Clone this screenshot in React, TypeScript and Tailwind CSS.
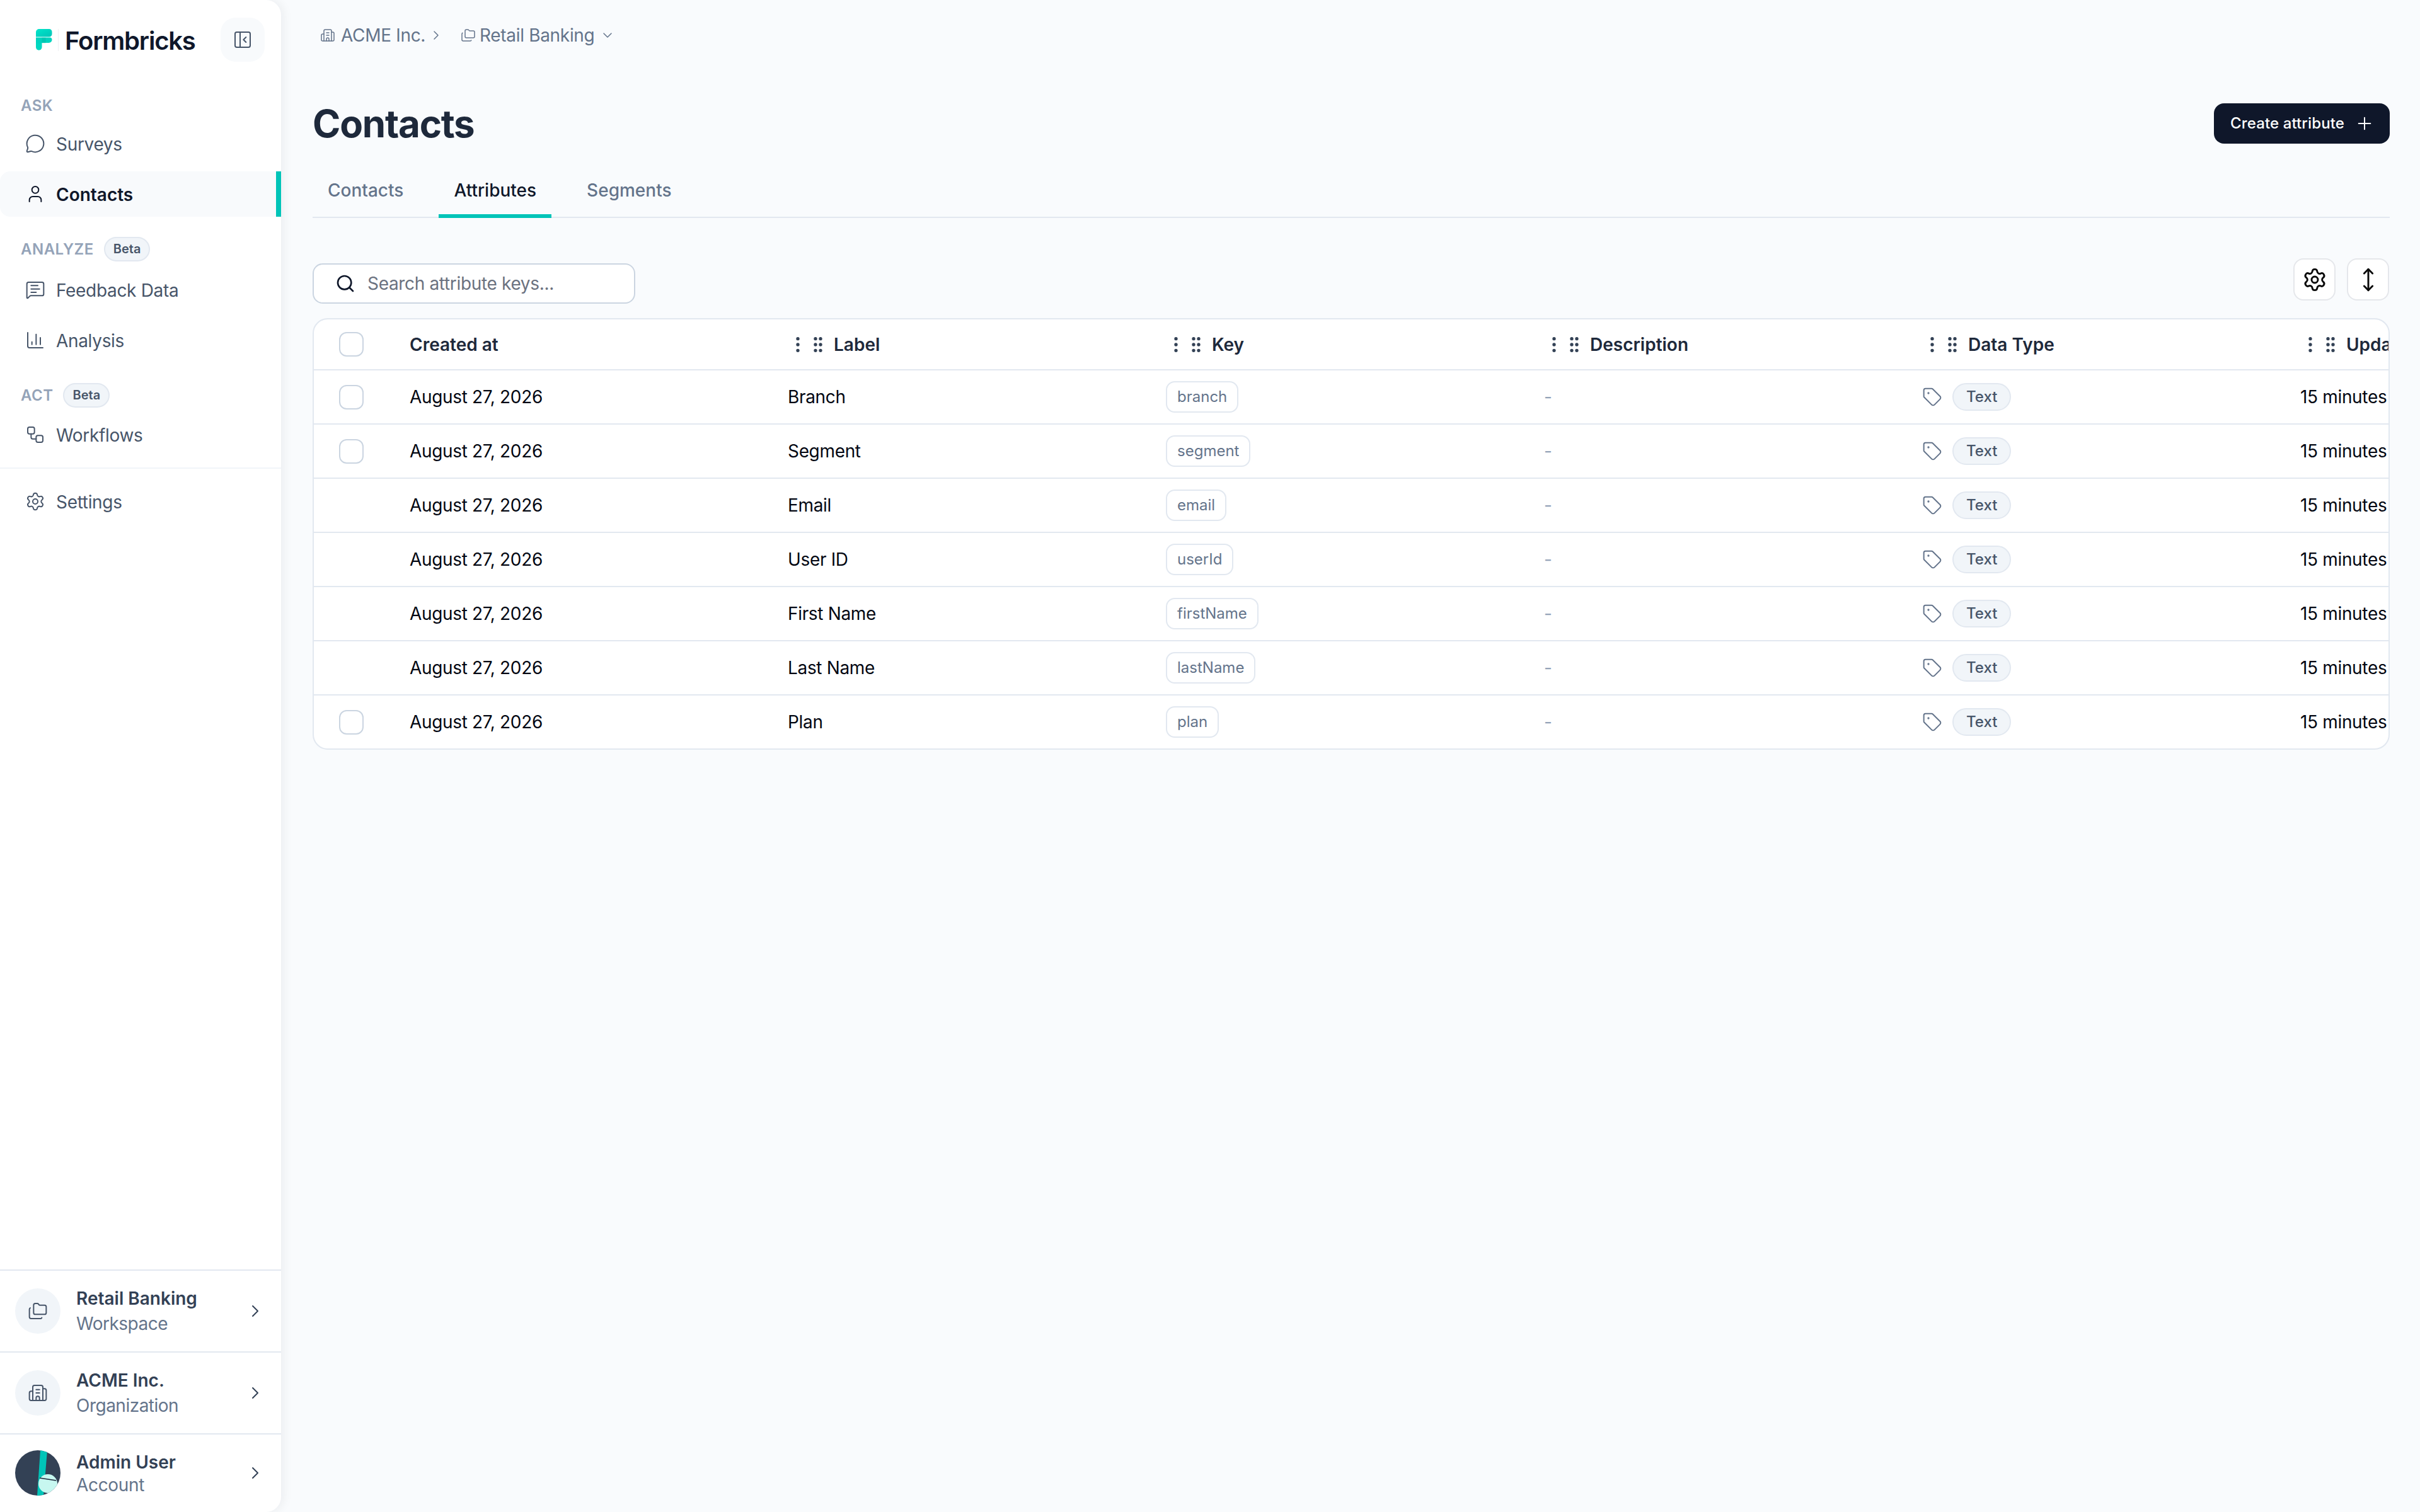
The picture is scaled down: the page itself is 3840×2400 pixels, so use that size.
import React from "react";
import {
  PanelLeftClose, MessageCircle, User, MessageSquareText, ChartColumn, Workflow, Settings,
  Folders, Building2, ChevronRight, ChevronDown, Plus, Search, MoveVertical, EllipsisVertical, GripVertical, Tag,
} from "lucide-react";

function NavItem({ icon: Icon, label, active }: { icon: any; label: string; active?: boolean }) {
  return (
    <div className={active
      ? "flex items-center h-[72px] pl-[40px] gap-[17px] bg-[#f8fafc] border-r-[8px] border-[#00c4b8] rounded-l-[16px] text-[#0f172a] font-semibold"
      : "flex items-center h-[72px] pl-[40px] gap-[17px] text-[#475569] font-normal tracking-[-0.02em]"}>
      <Icon size={32} strokeWidth={1.5} />
      <span className="text-[28px] leading-[40px] pt-px">{label}</span>
    </div>
  );
}

function GroupLabel({ label, beta }: { label: string; beta?: boolean }) {
  return (
    <div className="flex items-center gap-[16px] pl-[33px] h-[40px]">
      <span className="text-[24px] leading-[32px] font-semibold tracking-[0.02em] text-[#94a3b8] pt-px">{label}</span>
      {beta && (
        <span className="flex items-center h-[39px] px-[13px] rounded-full border-2 border-[#e2e8f0] bg-[#f1f5f9] text-[20px] font-semibold text-[#475569]">Beta</span>
      )}
    </div>
  );
}

function BottomRow({ icon, title, sub, tall }: { icon: React.ReactNode; title: string; sub: string; tall?: boolean }) {
  return (
    <div className={tall ? "flex items-center h-[130px] pl-[24px] pr-[25px] border-t-2 border-[#e2e8f0]" : "flex items-center h-[125px] pl-[24px] pr-[25px] border-t-2 border-[#e2e8f0] pb-[2px]"}>
      {icon}
      <div className="ml-[25px] flex-1 min-w-0">
        <div className="text-[28px] leading-[40px] font-semibold text-[#334155]">{title}</div>
        <div className={tall ? "text-[28px] leading-[40px] tracking-[-0.018em] text-[#64748b]" : "text-[28px] leading-[36px] tracking-[-0.012em] -mt-[2px] text-[#64748b]"}>{sub}</div>
      </div>
      <ChevronRight size={32} strokeWidth={1.5} className="text-[#334155]" />
    </div>
  );
}

function IconCircle({ icon: Icon }: { icon: any }) {
  return (
    <div className="flex items-center justify-center w-[72px] h-[72px] rounded-full bg-[#f1f5f9] text-[#475569] shrink-0">
      <Icon size={32} strokeWidth={1.5} />
    </div>
  );
}

function Avatar() {
  return (
    <svg width="72" height="72" viewBox="0 0 72 72" className="shrink-0">
      <defs><clipPath id="av"><circle cx="36" cy="36" r="36" /></clipPath></defs>
      <g clipPath="url(#av)">
        <rect width="72" height="72" fill="#334155" />
        <polygon points="40,0 51,0 45,72 35,72" fill="#00c4b8" />
        <circle cx="52" cy="53" r="15" fill="#c7f7f0" />
        <line x1="39" y1="44" x2="65" y2="48" stroke="#1e293b" strokeWidth="1.5" />
      </g>
    </svg>
  );
}

function Logo() {
  return (
    <svg width="26" height="34" viewBox="0 0 26 34" className="shrink-0">
      <defs>
        <linearGradient id="lg" x1="0" y1="0" x2="1" y2="1">
          <stop offset="0" stopColor="#00e6ca" />
          <stop offset="1" stopColor="#00c4b8" />
        </linearGradient>
      </defs>
      <path d="M5 0H21a4.5 4.5 0 0 1 4.5 4.5V8a4.5 4.5 0 0 1-4.5 4.5H0V5a5 5 0 0 1 5-5z" fill="url(#lg)" />
      <path d="M0 13.5H22a3.5 3.5 0 0 1 3.5 3.5a5 5 0 0 1-5 5H9.5V23H0z" fill="#00d4be" />
      <path d="M0 23H9.5V29a4.7 4.7 0 0 1-9.5 0z" fill="#00d8c0" />
      <rect x="9.5" y="13.5" width="6" height="9" fill="#00a89a" opacity="0.3" />
    </svg>
  );
}

const rows: [string, string, boolean][] = [
  ["Branch", "branch", true],
  ["Segment", "segment", true],
  ["Email", "email", false],
  ["User ID", "userId", false],
  ["First Name", "firstName", false],
  ["Last Name", "lastName", false],
  ["Plan", "plan", true],
];

function Checkbox() {
  return <div className="w-[39px] h-[39px] rounded-[12px] border-2 border-[#cbd5e1] bg-white" />;
}

function HeadCell({ label }: { label: string }) {
  return (
    <div className="w-[600px] shrink-0 flex items-center pl-[24px]">
      <EllipsisVertical size={32} strokeWidth={2} className="text-[#334155] shrink-0" />
      <GripVertical size={32} strokeWidth={2} className="text-[#334155] shrink-0" />
      <span className="ml-[9px] text-[28px] font-semibold text-[#1e293b]">{label}</span>
    </div>
  );
}

export default function App() {
  return (
    <div className="flex w-[3840px] h-[2400px] overflow-hidden bg-[#f9fbfd] font-['Inter',sans-serif]">
      <aside className="flex flex-col w-[446px] h-full shrink-0 bg-white rounded-r-[24px] shadow-[4px_0_16px_rgba(15,23,42,0.06)]">
        <div className="flex items-center h-[126px] pl-[57px] pr-[26px] shrink-0">
          <Logo />
          <div className="ml-[9px] w-px h-[35px] bg-[#eef0f3]" />
          <span className="ml-[10px] mt-[4px] text-[40px] leading-[48px] font-semibold tracking-[-0.03em] text-[#0f172a]">Formbricks</span>
          <div className="ml-auto flex items-center justify-center w-[70px] h-[70px] rounded-[24px] bg-[#f8fafc] text-[#475569]">
            <PanelLeftClose size={32} strokeWidth={1.5} />
          </div>
        </div>

        <div className="mt-[21px]"><GroupLabel label="ASK" /></div>
        <div className="mt-[5px] flex flex-col gap-[8px]">
          <NavItem icon={MessageCircle} label="Surveys" />
          <NavItem icon={User} label="Contacts" active />
        </div>

        <div className="mt-[31px]"><GroupLabel label="ANALYZE" beta /></div>
        <div className="mt-[9px] flex flex-col gap-[8px]">
          <NavItem icon={MessageSquareText} label="Feedback Data" />
          <NavItem icon={ChartColumn} label="Analysis" />
        </div>

        <div className="mt-[31px]"><GroupLabel label="ACT" beta /></div>
        <div className="mt-[7px]">
          <NavItem icon={Workflow} label="Workflows" />
        </div>

        <div className="mt-[16px] border-t-2 border-[#f1f5f9]" />
        <div className="mt-[16px]">
          <NavItem icon={Settings} label="Settings" />
        </div>

        <div className="mt-auto">
          <BottomRow icon={<IconCircle icon={Folders} />} title="Retail Banking" sub="Workspace" tall />
          <BottomRow icon={<IconCircle icon={Building2} />} title="ACME Inc." sub="Organization" tall />
          <BottomRow icon={<Avatar />} title="Admin User" sub="Account" />
        </div>
      </aside>

      <main className="flex-1 min-w-0 pl-[50px] pr-[48px]">
        <div className="flex items-center h-[112px] pl-[12px] text-[#64748b] tracking-[-0.02em]">
          <Building2 size={24} strokeWidth={1.5} />
          <span className="ml-[9px] text-[28px]">ACME Inc.</span>
          <ChevronRight size={24} strokeWidth={1.5} className="ml-[5px]" />
          <Folders size={24} strokeWidth={1.5} className="ml-[27px]" />
          <span className="ml-[6px] text-[28px]">Retail Banking</span>
          <ChevronDown size={24} strokeWidth={1.5} className="ml-[9px]" />
        </div>

        <div className="flex items-center justify-between h-[64px] mt-[52px]">
          <h1 className="text-[60px] leading-[80px] font-bold tracking-[-0.02em] text-[#1e293b]">Contacts</h1>
          <button className="flex items-center h-[64px] pl-[26px] pr-[24px] rounded-[16px] bg-[#0f172a] text-white text-[24px] font-medium tracking-[0.005em]">
            Create attribute
            <Plus size={32} strokeWidth={1.5} className="ml-[16px]" />
          </button>
        </div>

        <div className="flex h-[71px] mt-[47px] gap-[32px] border-b-2 border-[#e2e8f0] text-[28px] font-medium text-[#64748b]">
          <div className="flex items-center h-[69px] px-[24px] pb-[15px]">Contacts</div>
          <div className="flex items-center h-[71px] px-[24px] pb-[11px] text-[#0f172a] border-b-[6px] border-[#00c4b8] rounded-t-[4px]">Attributes</div>
          <div className="flex items-center h-[69px] px-[24px] pb-[15px]">Segments</div>
        </div>

        <div className="flex items-start justify-between h-[71px] mt-[64px]">
          <div className="flex items-center w-[512px] h-[64px] mt-[8px] pl-[34px] rounded-[16px] border-2 border-[#cbd5e1] bg-white">
            <Search size={32} strokeWidth={2} className="text-[#0f172a]" />
            <span className="ml-[19px] text-[28px] tracking-[-0.012em] text-[#6b7280]">Search attribute keys...</span>
          </div>
          <div className="flex gap-[18px] pr-px">
            <div className="flex items-center justify-center w-[67px] h-[67px] rounded-[16px] border-2 border-[#e5e7eb] bg-white text-[#0a0a0a]">
              <Settings size={40} strokeWidth={1.75} />
            </div>
            <div className="flex items-center justify-center w-[67px] h-[67px] rounded-[16px] border-2 border-[#e5e7eb] bg-white text-[#0a0a0a]">
              <MoveVertical size={40} strokeWidth={1.75} />
            </div>
          </div>
        </div>

        <div className="mt-[24px] rounded-[24px] border-2 border-[#e2e8f0] bg-white overflow-hidden">
          <div className="flex items-center h-[81px] border-b-2 border-[#e2e8f0] whitespace-nowrap">
            <div className="w-[128px] shrink-0 pl-[40px]"><Checkbox /></div>
            <div className="w-[600px] shrink-0 pl-[24px] text-[28px] font-semibold text-[#1e293b]">Created at</div>
            <HeadCell label="Label" />
            <HeadCell label="Key" />
            <HeadCell label="Description" />
            <HeadCell label="Data Type" />
            <HeadCell label="Updated at" />
          </div>
          {rows.map(([label, key, check], i) => (
            <div key={key} className={i < rows.length - 1 ? "flex items-center h-[86px] border-b-2 border-[#e2e8f0] whitespace-nowrap text-[28px] tracking-[-0.012em] text-[#030712]" : "flex items-center h-[84px] whitespace-nowrap text-[28px] tracking-[-0.012em] text-[#030712]"}>
              <div className="w-[128px] shrink-0 pl-[40px]">{check && <Checkbox />}</div>
              <div className="w-[600px] shrink-0 pl-[24px]">August 27, 2026</div>
              <div className="w-[600px] shrink-0 pl-[24px]">{label}</div>
              <div className="w-[600px] shrink-0 pl-[24px]">
                <span className="inline-flex items-center h-[50px] px-[16px] rounded-[14px] border-2 border-[#e2e8f0] text-[24px] tracking-normal text-[#64748b]">{key}</span>
              </div>
              <div className="w-[600px] shrink-0 pl-[24px] text-[#94a3b8]">-</div>
              <div className="w-[600px] shrink-0 pl-[24px] flex items-center">
                <Tag size={32} strokeWidth={1.5} className="text-[#64748b]" />
                <span className="ml-[16px] inline-flex items-center h-[44px] px-[20px] rounded-full border-2 border-[#e2e8f0] bg-[#f1f5f9] text-[24px] tracking-normal font-medium text-[#475569]">Text</span>
              </div>
              <div className="w-[600px] shrink-0 pl-[24px]">15 minutes ago</div>
            </div>
          ))}
        </div>
      </main>
    </div>
  );
}
